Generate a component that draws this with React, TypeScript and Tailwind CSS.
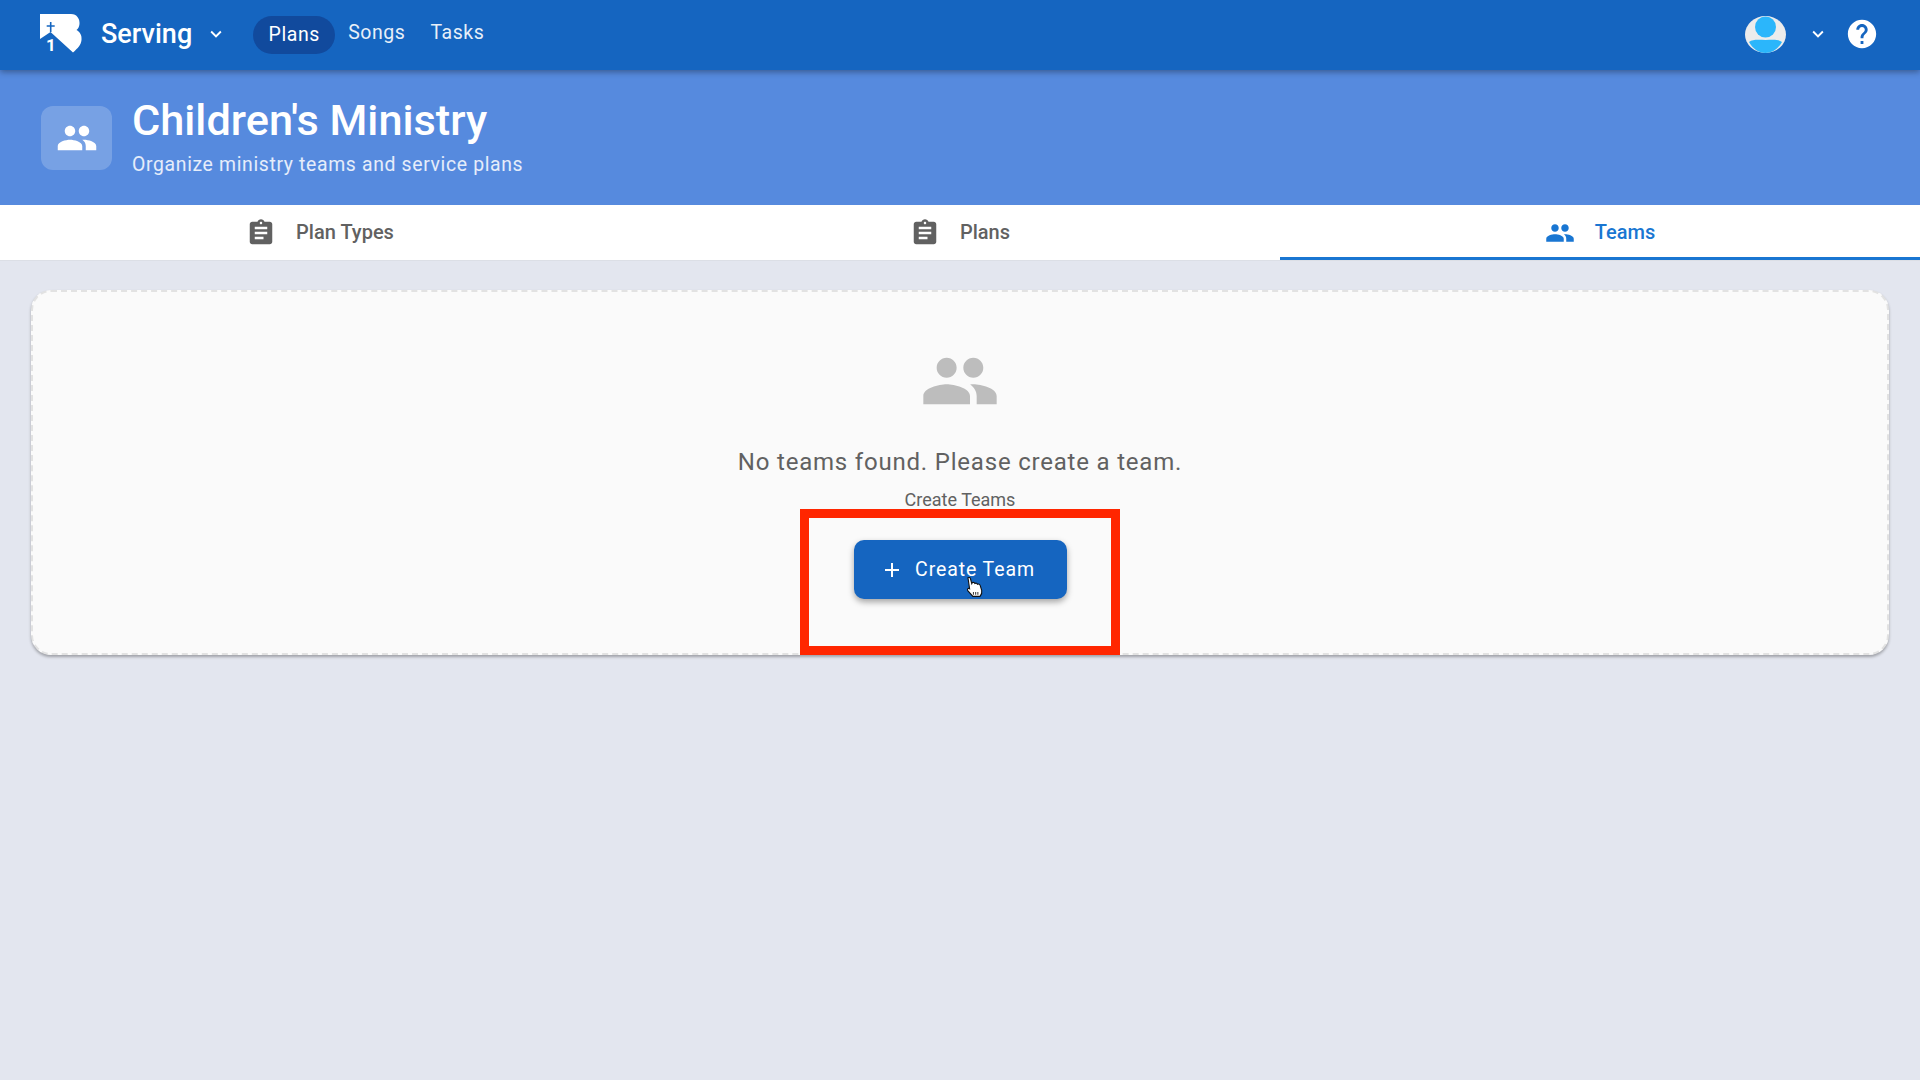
import { MdAdd, MdAssignment, MdExpandMore, MdHelp, MdPeople } from "react-icons/md";

const tabs = [
  { label: "Plan Types", icon: MdAssignment, active: false },
  { label: "Plans", icon: MdAssignment, active: false },
  { label: "Teams", icon: MdPeople, active: true },
];

function Logo() {
  return (
    <svg viewBox="0 0 42 40" className="h-[40px] w-[42px] overflow-visible">
      <path
        d="M0 0H31C37 0 40 5 39.5 10C39.2 13 38 15 36.5 16C40 18 42 21 41.5 26C41 31 38 34 33 38.5L10.5 18L0 25Z"
        fill="#ffffff"
      />
      <path d="M10.7 8V18M6.7 12H14.7" stroke="#1565c0" strokeWidth="1.6" fill="none" />
      <text x="6" y="37" fill="#ffffff" fontSize="17" fontWeight="700" fontFamily="Roboto, sans-serif">
        1
      </text>
    </svg>
  );
}

function Avatar() {
  return (
    <svg viewBox="0 0 41 37" className="h-[37px] w-[41px]">
      <ellipse cx="20.5" cy="18.5" rx="20.5" ry="18.5" fill="#ececec" />
      <circle cx="20.5" cy="11" r="10.5" fill="#2bb6fb" />
      <path d="M4 26C8 23 14 24 20.5 24C27 24 33 23 37 26C33 33 27 37 20.5 37C14 37 8 33 4 26Z" fill="#2bb6fb" />
    </svg>
  );
}

function HandCursor() {
  return (
    <svg viewBox="0 0 18 20" className="absolute top-[36px] left-[110px] h-[22px] w-[20px]">
      <path
        d="M3.5 1.5C4.5 1 5.5 1.5 5.8 2.5L7 7L7.5 6C8.5 5.5 9.5 6 9.8 6.8C10.8 6.2 11.8 6.6 12.1 7.5C13.2 7 14.3 7.6 14.6 8.6L16 13C16.4 15 15.8 17 14.5 18.5H8L3.5 13.5C2.8 12.5 3 11.4 4 11.2L5 11.6Z"
        fill="#ffffff"
        stroke="#111111"
        strokeWidth="1"
      />
      <path d="M8.5 14.5V17M10.5 14.5V17M12.5 14.5V17" stroke="#444444" strokeWidth="1" />
    </svg>
  );
}

export default function App() {
  return (
    <div className="min-h-[1080px] bg-[#e3e6ef] font-['Roboto',sans-serif]">
      <header className="relative z-10 flex h-[70px] items-center bg-[#1565c0] pr-[41px] pl-[40px] shadow-[0_2px_6px_rgba(0,0,0,0.35)]">
        <div className="-mt-[2px] flex items-center">
          <Logo />
          <span className="ml-[19px] text-[27px] font-medium text-white">Serving</span>
          <MdExpandMore className="ml-[13px] text-[22px] text-white" />
        </div>
        <nav className="ml-[26px] flex items-center text-[19.5px] tracking-[0.55px] text-white">
          <span className="flex h-[38px] w-[82px] items-center justify-center rounded-full bg-[#114a9d]">Plans</span>
          <span className="-mt-[5px] ml-[13px] opacity-90">Songs</span>
          <span className="-mt-[5px] ml-[25px] opacity-90">Tasks</span>
        </nav>
        <div className="-mt-[2px] ml-auto flex items-center">
          <Avatar />
          <MdExpandMore className="ml-[21px] text-[22px] text-white" />
          <MdHelp className="ml-[16px] text-[34px] text-white" />
        </div>
      </header>

      <section className="flex h-[135px] items-center gap-[20px] bg-[#568ade] pl-[41px]">
        <div className="flex h-[64px] w-[71px] items-center justify-center rounded-[12px] bg-white/20">
          <MdPeople className="text-[42px] text-white" />
        </div>
        <div>
          <h1 className="-mt-[1px] text-[43.3px] leading-[48px] font-medium text-white">Children's Ministry</h1>
          <p className="mt-[7px] text-[19.4px] leading-[26px] tracking-[0.65px] text-white/85">
            Organize ministry teams and service plans
          </p>
        </div>
      </section>

      <div className="grid h-[56px] grid-cols-3 border-b border-[#dcdfe6] bg-white">
        {tabs.map((tab) => (
          <div
            key={tab.label}
            className={
              tab.active
                ? "flex items-center justify-center gap-[20px] border-y-[3px] border-t-transparent border-b-[#1976d2] text-[#1976d2]"
                : "flex items-center justify-center gap-[20px] border-y-[3px] border-transparent text-[#616161]"
            }
          >
            <tab.icon className="text-[30px]" />
            <span className="-mt-[1px] text-[20px] font-medium">{tab.label}</span>
          </div>
        ))}
      </div>

      <main className="px-[31px] pt-[29px]">
        <div className="flex h-[365px] flex-col items-center rounded-[20px] border-2 border-dashed border-[#e2e2e2] bg-[#fafafa] pt-[49px] shadow-[0_2px_3px_rgba(0,0,0,0.3)]">
          <MdPeople className="shrink-0 text-[80px] text-[#bdbdbd]" />
          <p className="mt-[25px] text-[24px] leading-[32px] tracking-[0.8px] text-[#616161]">
            No teams found. Please create a team.
          </p>
          <p className="mt-[12px] text-[18px] leading-[20px] text-[#616161]">Create Teams</p>
          <div className="-mt-[1px] h-[146px] w-[320px] shrink-0 border-[9px] border-[#ff2600] pt-[22px]">
            <button className="relative mx-auto flex h-[59px] w-[213px] items-center justify-center gap-[11px] rounded-[10px] bg-[#1565c0] pr-[5px] text-[19.5px] tracking-[0.9px] text-white shadow-[0_3px_6px_rgba(0,0,0,0.35)]">
              <MdAdd className="text-[24px]" />
              Create Team
              <HandCursor />
            </button>
          </div>
        </div>
      </main>
    </div>
  );
}
